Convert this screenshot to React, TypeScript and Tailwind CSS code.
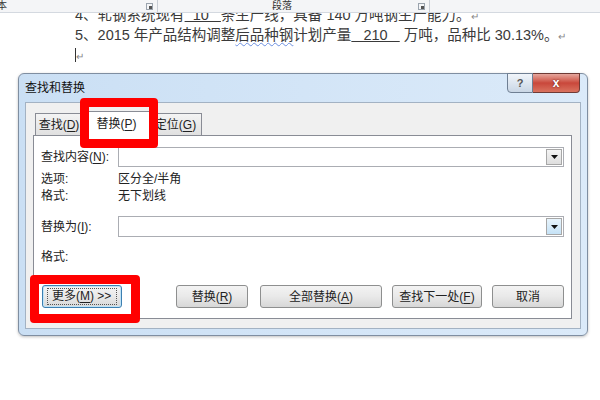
import React from "react";

const FONT = "font-['Liberation_Sans','Noto_Sans_CJK_SC',sans-serif]";

function Key({ k }: { k: string }) {
  return (
    <>
      (<span className="underline underline-offset-2">{k}</span>)
    </>
  );
}

function Combo({ hot }: { hot?: boolean }) {
  return (
    <div className="flex-1 h-full flex items-center border border-[#abadb3] bg-white p-px">
      <div className="flex-1" />
      <div
        className={`w-[16px] h-full flex items-center justify-center border border-[#a7a7a7] ${
          hot ? "bg-gradient-to-b from-[#e8f4fc] to-[#c5e2f6] border-[#6fa4d0]" : "bg-gradient-to-b from-[#f4f4f4] to-[#dedede]"
        }`}
      >
        <svg width="7" height="4" viewBox="0 0 7 4">
          <path d="M0 0h7L3.5 4z" fill="#111" />
        </svg>
      </div>
    </div>
  );
}

function Btn({ w, children, focus }: { w: string; children: React.ReactNode; focus?: boolean }) {
  return (
    <div
      className={`${w} h-[23px] rounded-[3px] border flex items-center justify-center text-[12px] text-[#222] bg-gradient-to-b from-[#f3f3f3] via-[#e9e9e9] to-[#d7d7d7] ${
        focus ? "border-[#3c7fb1] shadow-[inset_0_0_0_1px_#bfe3f7]" : "border-[#8e8f8f]"
      }`}
    >
      {focus ? (
        <div className="border border-dotted border-[#555] px-[4px] leading-[15px] w-[70px] text-left">{children}</div>
      ) : (
        children
      )}
    </div>
  );
}

export default function App() {
  return (
    <div className={`w-[600px] h-[400px] bg-white relative overflow-hidden ${FONT}`}>
      {/* ribbon strip */}
      <div className="h-[13px] bg-[#f4f5f7] border-b border-[#d4d9e0] flex items-center text-[10px] text-[#333] leading-none">
        <div className="w-[157px] flex items-center">
          <span className="-ml-[3px]">本</span>
          <div className="ml-auto mr-[4px] w-[7px] h-[7px] border border-[#9aa3ad] relative">
            <div className="absolute right-0 bottom-0 w-[3px] h-[3px] bg-[#555]" />
          </div>
        </div>
        <div className="w-px h-[12px] bg-[#c9ced6]" />
        <span className="ml-[114px]">段落</span>
        <div className="ml-[126px] w-[7px] h-[7px] border border-[#9aa3ad] relative">
          <div className="absolute right-0 bottom-0 w-[3px] h-[3px] bg-[#555]" />
        </div>
        <div className="ml-[4px] w-px h-[12px] bg-[#c9ced6]" />
      </div>

      {/* document */}
      <div className="h-[60px] overflow-hidden pl-[75px] text-[14.5px] leading-[18px] text-[#3a3a3a]">
        <div className="-mt-[7px] whitespace-nowrap">
          4、轧钢系统现有<span className="underline">&nbsp;&nbsp;10&nbsp;&nbsp;&nbsp;</span>条生产线，具备 140 万吨钢生产能力。
          <span className="text-[10px] text-[#888]">↵</span>
        </div>
        <div className="whitespace-nowrap">
          5、2015 年产品结构调整
          <span className="underline decoration-wavy decoration-[#6b8fe0] decoration-1 underline-offset-2">后品种钢</span>
          计划产量<span className="underline">&nbsp;&nbsp;&nbsp;210&nbsp;&nbsp;&nbsp;</span> 万吨，品种比 30.13%。
          <span className="text-[10px] text-[#888]">↵</span>
        </div>
        <div className="flex items-center h-[18px]">
          <div className="w-px h-[14px] bg-[#333]" />
          <span className="text-[10px] text-[#888] mt-[4px]">↵</span>
        </div>
      </div>

      {/* dialog */}
      <div className="ml-[18px] w-[570px] h-[263px] rounded-[6px] border border-[#7f8ea1] bg-gradient-to-r from-[#cadff4] via-[#d3e5f7] to-[#dbeaf9] flex flex-col shadow-[0_1px_3px_rgba(0,0,0,0.25)]">
        <div className="h-[28px] flex items-start">
          <span className="self-center ml-[6px] text-[12px] text-[#111]">查找和替换</span>
          <div className="ml-auto mr-[7px] -mt-px flex">
            <div className="w-[26px] h-[20px] rounded-bl-[4px] border border-[#6f7f93] bg-gradient-to-b from-[#f1f5fa] to-[#c9d6e5] flex items-center justify-center text-[11px] text-[#555] font-bold">
              ?
            </div>
            <div className="w-[47px] h-[20px] rounded-br-[4px] border border-l-0 border-[#6f3a35] bg-gradient-to-b from-[#e5a69d] via-[#c9473b] to-[#d9725f] flex items-center justify-center text-[12px] text-white font-bold [text-shadow:0_0_2px_#5a1a14]">
              x
            </div>
          </div>
        </div>

        <div className="mx-[6px] h-[227px] border border-[#a3b2c3] bg-[#f0f0f0] pl-[7px] pr-[8px] pt-[10px]">
          {/* tabs */}
          <div className="h-[22px] flex items-end pl-[2px] text-[12px] text-[#222]">
            <div className="w-[48px] h-[22px] border border-b-0 border-[#898c95] bg-gradient-to-b from-[#f4f4f4] to-[#e0e0e0] flex items-center justify-center">
              查找<Key k="D" />
            </div>
            <div className="relative z-10 w-[67px] h-[25px] -mb-px border border-b-0 border-[#898c95] bg-white flex items-center justify-center">
              替换<Key k="P" />
            </div>
            <div className="w-[52px] h-[22px] border border-b-0 border-l-0 border-[#898c95] bg-gradient-to-b from-[#f4f4f4] to-[#e0e0e0] flex items-center justify-center">
              定位<Key k="G" />
            </div>
          </div>

          {/* tab panel */}
          <div className="h-[184px] border border-[#898c95] bg-white pl-[7px] pr-[7px] pt-[11px] text-[12px] text-[#222]">
            <div className="flex items-center h-[20px]">
              <span className="w-[77px]">
                查找内容<Key k="N" />:
              </span>
              <Combo />
            </div>
            <div className="flex mt-[4px] leading-[16px]">
              <span className="w-[77px]">选项:</span>
              <span>区分全/半角</span>
            </div>
            <div className="flex mt-[1px] leading-[16px]">
              <span className="w-[77px]">格式:</span>
              <span>无下划线</span>
            </div>
            <div className="flex items-center h-[21px] mt-[12px]">
              <span className="w-[77px]">
                替换为<Key k="I" />:
              </span>
              <Combo hot />
            </div>
            <div className="flex mt-[12px] leading-[16px]">
              <span>格式:</span>
            </div>
            <div className="flex mt-[20px] pl-[1px]">
              <Btn w="w-[80px]" focus>
                更多<Key k="M" /> &gt;&gt;
              </Btn>
              <div className="ml-[54px]">
                <Btn w="w-[72px]">
                  替换<Key k="R" />
                </Btn>
              </div>
              <div className="ml-[12px]">
                <Btn w="w-[122px]">
                  全部替换<Key k="A" />
                </Btn>
              </div>
              <div className="ml-[10px]">
                <Btn w="w-[90px]">
                  查找下一处<Key k="F" />
                </Btn>
              </div>
              <div className="ml-[10px]">
                <Btn w="w-[72px]">取消</Btn>
              </div>
            </div>
          </div>
        </div>
      </div>

      {/* red annotation boxes */}
      <div className="absolute left-[80px] top-[98px] w-[78px] h-[50px] border-[9px] border-[#ff0000] rounded-[4px] z-20" />
      <div className="absolute left-[30px] top-[275px] w-[110px] h-[48px] border-[9px] border-[#ff0000] rounded-[4px] z-20" />
    </div>
  );
}
